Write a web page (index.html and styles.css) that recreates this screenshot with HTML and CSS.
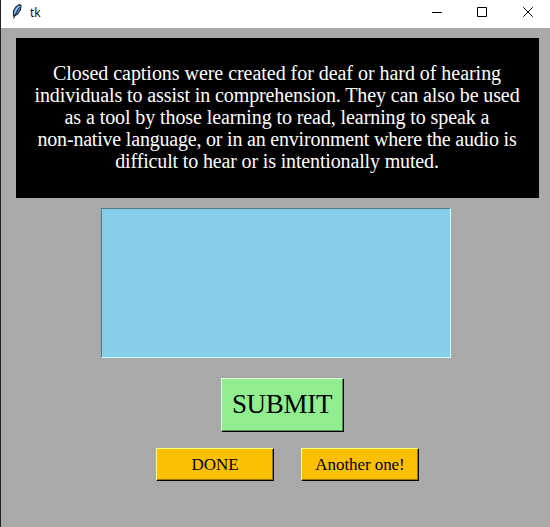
FILE: index.html
```
<!DOCTYPE html>
<html lang="en">
<head>
<meta charset="utf-8">
<title>tk</title>
<link rel="stylesheet" href="styles.css">
</head>
<body>
<div class="window">
  <header class="titlebar">
    <svg class="feather" width="16" height="18" viewBox="0 0 16 18">
      <path d="M4.5 14 4.5 9 7 5 10.5 2.5 12 3.5 11.3 8 8.5 12 5.5 14Z" fill="#5b97df" stroke="#202b3d" stroke-width="1.2"/>
      <path d="M10 4 7.2 7.5 5.7 12" fill="none" stroke="#a6cdf5" stroke-width="1.2"/>
      <path d="M10.5 5.5 7.5 10 4.5 16.5" fill="none" stroke="#18243a" stroke-width="1"/>
    </svg>
    <span class="title">tk</span>
    <svg class="controls" width="106" height="12" viewBox="0 0 106 12" fill="none" stroke="#000">
      <path d="M0 5.5H10M45.5 .5H54.5V9.5H45.5ZM91.3 .3 100.7 9.7M100.7 .3 91.3 9.7"/>
    </svg>
  </header>
  <main class="content">
    <p class="caption">
      <span class="line l1">Closed captions were created for deaf or hard of hearing</span>
      <span class="line l2">individuals to assist in comprehension. They can also be used</span>
      <span class="line l3">as a tool by those learning to read, learning to speak a</span>
      <span class="line l4">non-native language, or in an environment where the audio is</span>
      <span class="line l5">difficult to hear or is intentionally muted.</span>
    </p>
    <div class="entry" contenteditable="true"></div>
    <button class="button submit">SUBMIT</button>
    <div class="actions">
      <button class="button small">DONE</button>
      <button class="button small">Another one!</button>
    </div>
  </main>
</div>
</body>
</html>
```
FILE: styles.css
```
* { box-sizing: border-box; }
body { margin: 0; }
.window {
  width: 550px;
  height: 527px;
  background: #a9a9a9;
  border-left: 1px solid #252326;
  overflow: hidden;
}
.titlebar {
  height: 28px;
  background: #fff;
  display: flex;
  align-items: flex-start;
}
.feather { margin: 2px 0 0 8px; }
.title {
  margin-left: 5px;
  font: 12px/16px "Open Sans", sans-serif;
  margin-top: 5px;
}
.controls { margin: 7px 12px 0 auto; }
.content {
  display: flex;
  flex-direction: column;
  align-items: center;
  font-family: "Liberation Serif", serif;
  padding-top: 10px;
}
.caption {
  width: 523px;
  height: 160px;
  margin: 0 0 0 4px;
  padding: 24px 1px 0 0;
  background: #000;
  color: #fff;
  text-align: center;
  font-size: 20px;
  line-height: 22px;
}
.line { display: block; white-space: nowrap; font-variant-ligatures: none; }
.l1 { letter-spacing: -0.04px; }
.l2 { letter-spacing: -0.11px; }
.l3 { letter-spacing: -0.09px; }
.l4 { letter-spacing: -0.2px; }
.l5 { letter-spacing: -0.15px; }
.entry {
  width: 350px;
  height: 150px;
  margin: 10px 0 0 1px;
  background: #87ceeb;
  border: 1px solid;
  border-color: #517c8d #caffff #caffff #517c8d;
}
.button {
  font-family: inherit;
  color: #000;
  padding: 0;
  border: 1px solid;
}
.submit {
  width: 123px;
  height: 54px;
  margin: 20px 0 0 14px;
  padding: 0 1px 2px 0;
  font-size: 27px;
  letter-spacing: -0.3px;
  background: #90ee90;
  border-color: #d8ffd8 #000 #000 #d8ffd8;
  box-shadow: inset -1px -1px #568f56;
}
.actions {
  display: flex;
  gap: 27px;
  margin: 16px 0 0 24px;
}
.small {
  width: 118px;
  height: 33px;
  font-size: 17px;
  letter-spacing: -0.07px;
  background: #fbc004;
  border-color: #ffff80 #000 #000 #ffff80;
  box-shadow: inset -1px -1px #977302;
}
```
